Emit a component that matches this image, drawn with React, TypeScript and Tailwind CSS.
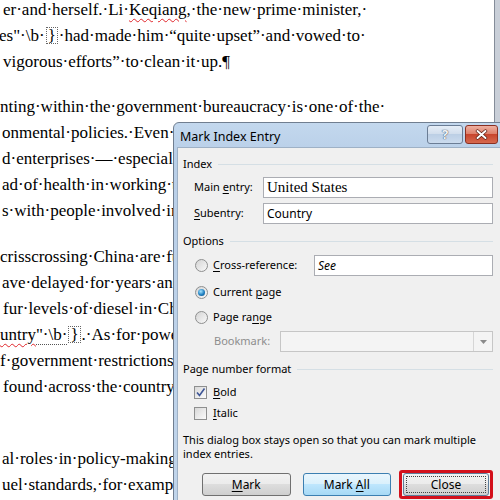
import React from "react";

const sans = "font-['Noto_Sans',sans-serif]";
const serif = "font-['Liberation_Serif',serif]";

type Kids = { children?: React.ReactNode; className?: string };

const Key = ({ children }: Kids) => (
  <span className="underline decoration-1 underline-offset-[2px]">{children}</span>
);

const Squiggle = ({ children }: Kids) => (
  <span className="underline decoration-wavy decoration-[#e0262b] decoration-1 underline-offset-[3px]">{children}</span>
);

const FieldEnd = () => (
  <span className="inline-block border border-dotted border-[#666] leading-[15px] px-[1px] mx-[1px]">{"}"}</span>
);

const Line = ({ children, className = "" }: Kids) => (
  <div className={`h-[26px] leading-[26px] whitespace-nowrap ${className}`}>{children}</div>
);

const Radio = ({ checked = false }: { checked?: boolean }) => (
  <span className="w-[13px] h-[13px] rounded-full border border-[#8e8f8f] bg-[linear-gradient(135deg,#d4d4d4,#f9f9f9)] flex items-center justify-center shrink-0">
    {checked && (
      <span className="w-[7px] h-[7px] rounded-full bg-[radial-gradient(circle_at_40%_35%,#a6e4ff,#1f7fc0_55%,#0b4a80)]" />
    )}
  </span>
);

const Check = ({ checked = false }: { checked?: boolean }) => (
  <span className="w-[13px] h-[13px] border border-[#8e8f8f] bg-[linear-gradient(135deg,#d8d8d8,#fbfbfb)] flex items-center justify-center shrink-0">
    {checked && (
      <svg width="11" height="11" viewBox="0 0 11 11">
        <path d="M2 5.5 L4.5 8.5 L9.5 1.5" fill="none" stroke="#3d5596" strokeWidth="1.6" />
      </svg>
    )}
  </span>
);

const GroupHead = ({ children, className = "" }: Kids) => (
  <div className={`h-[22px] flex items-center pl-[5px] ${className}`}>
    <span>{children}</span>
    <span className="flex-1 ml-[6px] h-px bg-[#d5dfe5]" />
  </div>
);

const Btn = ({ children, className = "" }: Kids) => (
  <div
    className={`w-[89px] h-[23px] rounded-[3px] border flex items-center justify-center text-[12px] ${className}`}
  >
    <span>{children}</span>
  </div>
);

function Document() {
  return (
    <div className={`flex-1 overflow-hidden ${serif} text-[17px] text-black`}>
      <div className="-mt-[3px]">
        <Line className="pl-[3px]">
          er·and·herself.·Li·<Squiggle>Keqiang</Squiggle>,·the·new·prime·minister,·
        </Line>
        <Line className="-ml-[1px]">
          es"·{"\\b"}·<FieldEnd />·had·made·him·“quite·upset”·and·vowed·to·
        </Line>
        <Line className="pl-[3px]">vigorous·efforts”·to·clean·it·up.¶</Line>
      </div>
      <div className="mt-[19px]">
        <Line>nting·within·the·government·bureaucracy·is·one·of·the·</Line>
        <Line className="pl-[2px]">onmental·policies.·Even·</Line>
        <Line className="pl-[2px]">d·enterprises·—·especially</Line>
        <Line className="pl-[2px]">ad·of·health·in·working·to</Line>
        <Line className="pl-[2px]">s·with·people·involved·in</Line>
      </div>
      <div className="mt-[20px]">
        <Line>crisscrossing·China·are·fu</Line>
        <Line className="pl-[2px]">ave·delayed·for·years·and</Line>
        <Line className="pl-[3px]">fur·levels·of·diesel·in·Chi</Line>
        <Line>
          <Squiggle>untry</Squiggle>
          <span className="border-b border-dotted border-[#555]">"·{"\\b"}·</span>
          <FieldEnd />.·As·for·power
        </Line>
        <Line>f·government·restrictions</Line>
        <Line className="pl-[3px]">found·across·the·country.</Line>
      </div>
      <div className="mt-[46px]">
        <Line className="pl-[2px]">al·roles·in·policy-making</Line>
        <Line className="pl-[2px]">uel·standards,·for·example</Line>
      </div>
    </div>
  );
}

function Dialog() {
  return (
    <div
      className={`absolute left-[173px] top-[122px] w-[333px] h-[400px] rounded-t-[6px] border border-[#707e90] bg-[linear-gradient(#c3d8ee,#b9cfe8_30px,#c1d5eb)] ${sans} text-black`}
    >
      <div className="h-[24px] flex">
        <div className="pl-[6px] pt-[5px] text-[12.5px] leading-[18px]">Mark Index Entry</div>
        <div className="ml-auto pt-[2px] pr-[7px] flex gap-[2px]">
          <div className="w-[36px] h-[19px] rounded-[3px] border border-[#6b7d95] bg-[linear-gradient(#e6eef7,#d2deed_45%,#bccfe5_50%,#cbdbee)] flex items-center justify-center text-[13px] font-bold leading-none text-[#f2f5f9] [text-shadow:0_0_1px_#3d4a5c,0_0_1px_#3d4a5c]">
            ?
          </div>
          <div className="w-[33px] h-[19px] rounded-[3px] border border-[#8a2f22] bg-[linear-gradient(#eeb0a1,#de806b_45%,#c8452d_50%,#d6694f)] flex items-center justify-center">
            <svg width="13" height="11" viewBox="0 0 13 11">
              <path d="M2.5 2 L10.5 9 M10.5 2 L2.5 9" stroke="#5a1d12" strokeWidth="3.4" strokeLinecap="round" />
              <path d="M2.5 2 L10.5 9 M10.5 2 L2.5 9" stroke="#ffffff" strokeWidth="2" strokeLinecap="round" />
            </svg>
          </div>
        </div>
      </div>

      <div className="ml-[3px] mr-[3px] h-[380px] border border-[#9eb1c6] bg-[#f0f0f0] text-[11px]">
        <div className="w-[315px]">
          <GroupHead className="mt-[5px]">Index</GroupHead>

          <div className="mt-[2px] h-[21px] flex items-center pl-[16px]">
            <span className="w-[69px]">
              Main <Key>e</Key>ntry:
            </span>
            <div className="flex-1 h-full border border-[#abadb3] bg-white flex items-center pl-[3px]">
              <span className={`${serif} text-[15px] leading-none`}>United States</span>
            </div>
          </div>

          <div className="mt-[5px] h-[21px] flex items-center pl-[16px]">
            <span className="w-[69px]">
              <Key>S</Key>ubentry:
            </span>
            <div className="flex-1 h-full border border-[#abadb3] bg-white flex items-center pl-[3px]">
              <span className="text-[12px] leading-none">Country</span>
            </div>
          </div>

          <GroupHead className="mt-[6px]">Options</GroupHead>

          <div className="mt-[3px] h-[21px] flex items-center pl-[17px]">
            <Radio />
            <span className="ml-[5px] w-[101px]">
              <Key>C</Key>ross-reference:
            </span>
            <div className="flex-1 h-full border border-[#abadb3] bg-white flex items-center pl-[3px]">
              <span className="text-[12px] italic leading-none">See</span>
            </div>
          </div>

          <div className="mt-[6px] h-[20px] flex items-center pl-[17px]">
            <Radio checked />
            <span className="ml-[5px]">
              Current <Key>p</Key>age
            </span>
          </div>

          <div className="mt-[5px] h-[20px] flex items-center pl-[17px]">
            <Radio />
            <span className="ml-[5px]">
              Page ra<Key>n</Key>ge
            </span>
          </div>

          <div className="mt-[4px] h-[21px] flex items-center pl-[36px]">
            <span className="w-[66px] text-[#8d8d8d]">Bookmark:</span>
            <div className="flex-1 h-full border border-[#c6c6c6] bg-[#f4f4f4] flex">
              <div className="flex-1" />
              <div className="w-[19px] border-l border-[#d6d6d6] flex items-center justify-center">
                <svg width="7" height="4" viewBox="0 0 7 4">
                  <path d="M0 0 H7 L3.5 4 Z" fill="#8a8a8a" />
                </svg>
              </div>
            </div>
          </div>

          <GroupHead className="mt-[6px]">Page number format</GroupHead>

          <div className="mt-[2px] h-[20px] flex items-center pl-[16px]">
            <Check checked />
            <span className="ml-[6px]">
              <Key>B</Key>old
            </span>
          </div>

          <div className="mt-[1px] h-[20px] flex items-center pl-[16px]">
            <Check />
            <span className="ml-[6px]">
              <Key>I</Key>talic
            </span>
          </div>

          <p className="mt-[10px] pl-[5px] leading-[14px]">
            This dialog box stays open so that you can mark multiple
            <br />
            index entries.
          </p>

          <div className="mt-[12px] flex items-start pl-[24px]">
            <Btn className="border-[#707070] bg-[linear-gradient(#f2f2f2,#ebebeb_50%,#dddddd_50%,#cfcfcf)]">
              <Key>M</Key>ark
            </Btn>
            <Btn className="ml-[12px] border-[#3c7fb1] bg-[linear-gradient(#eaf6fd,#d9f0fc_50%,#bee6fd_50%,#a7d9f5)]">
              Mark <Key>A</Key>ll
            </Btn>
            <div className="ml-[8px] -mt-[3px] border-[3px] border-[#d3101b] rounded-[3px] px-[1px]">
              <div className="w-[86px] h-[23px] rounded-[3px] border border-[#5e7d9a] bg-[linear-gradient(#f2f2f2,#ebebeb_50%,#dddddd_50%,#cfcfcf)] p-[2px]">
                <div className="h-full border border-dotted border-[#444] flex items-center justify-center text-[12px]">
                  Close
                </div>
              </div>
            </div>
          </div>
        </div>
      </div>
    </div>
  );
}

export default function App() {
  return (
    <div className="relative w-[500px] h-[500px] overflow-hidden bg-white">
      <div className="flex h-full">
        <Document />
        <div className="w-[6px] shrink-0 border-l border-[#858d99] bg-[#c9cfd8]" />
      </div>
      <Dialog />
    </div>
  );
}
